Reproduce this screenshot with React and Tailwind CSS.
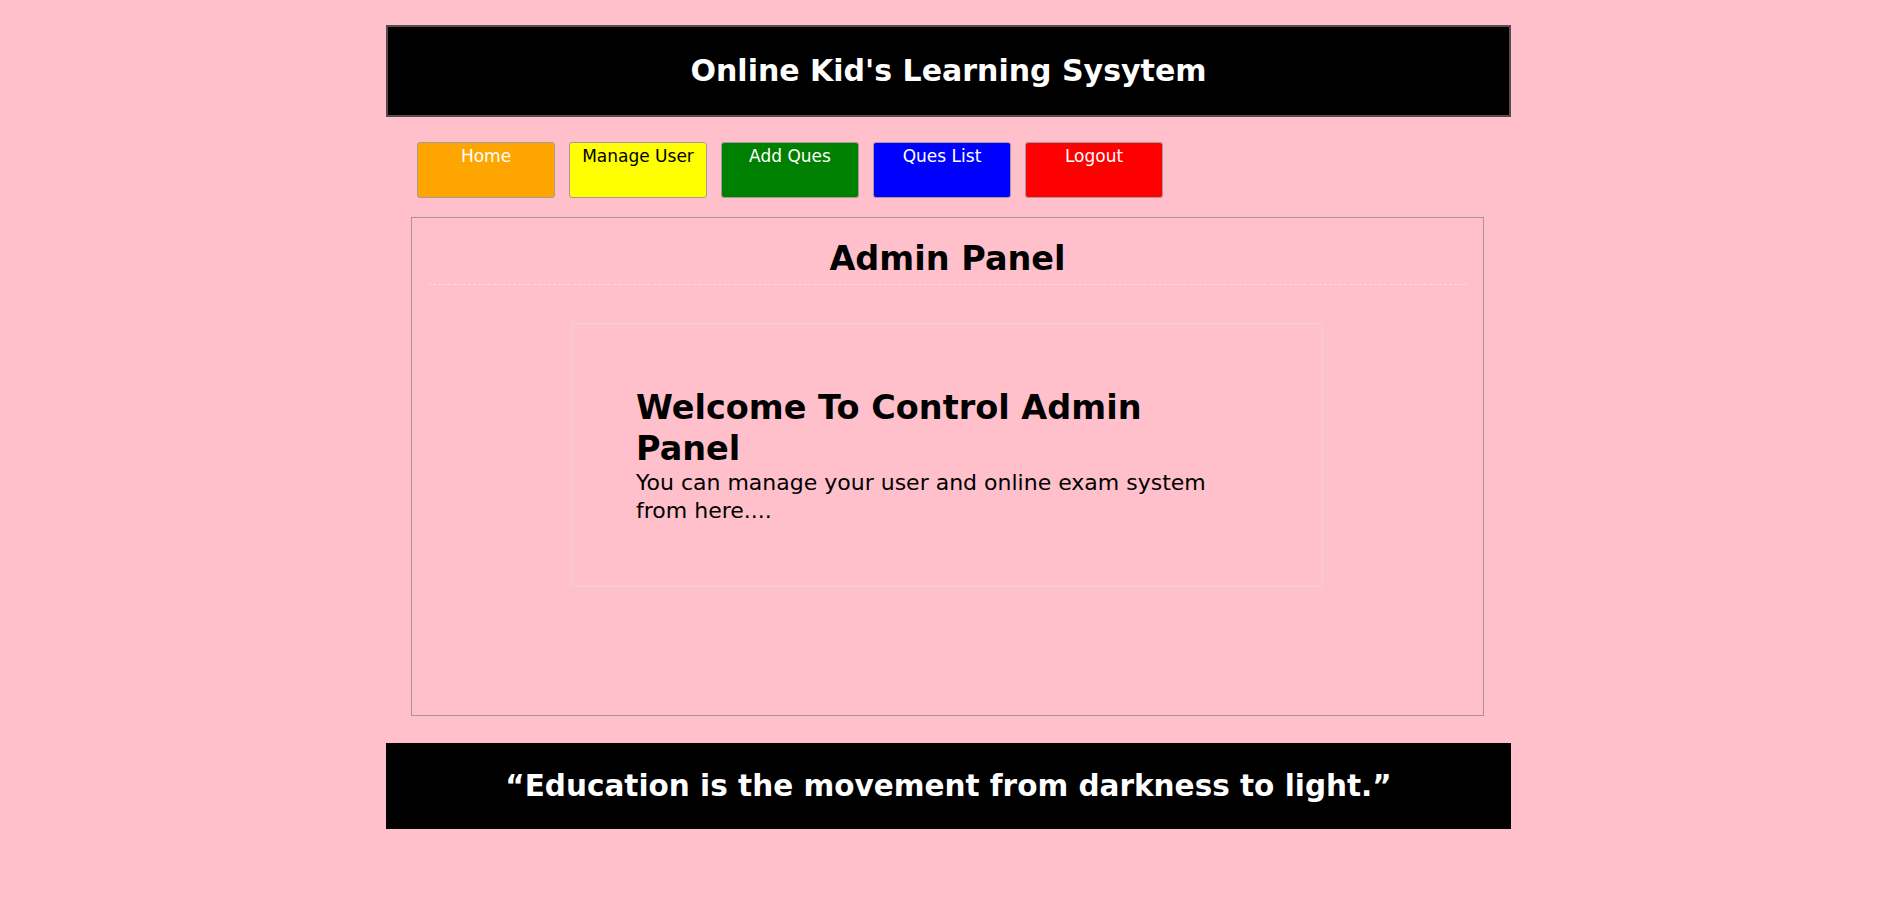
export default function App() {
  const font = { fontFamily: '"DejaVu Sans", Verdana, sans-serif' };
  const btns = [
    { t: "Home", c: "bg-[#ffa500] text-white" },
    { t: "Manage User", c: "bg-[#ffff00] text-black" },
    { t: "Add Ques", c: "bg-[#008000] text-white" },
    { t: "Ques List", c: "bg-[#0000ff] text-white" },
    { t: "Logout", c: "bg-[#ff0000] text-white" },
  ];
  return (
    <div className="min-h-[923px] w-full bg-[#ffc0cb] pt-[25px]" style={font}>
      <div className="ml-[386px] w-[1125px]">
        <header className="flex h-[92px] items-center justify-center border-2 border-[#584a4e] bg-black">
          <h1 className="text-[30px] font-bold leading-[36px] text-white">Online Kid's Learning Sysytem</h1>
        </header>
        <nav className="mt-[25px] flex gap-[14px] pl-[31px]">
          {btns.map((b) => (
            <button
              key={b.t}
              className={`flex h-[56px] w-[138px] items-start justify-center rounded-[3px] border border-[#a89a9c] pt-[3px] text-[17px] leading-[20px] ${b.c}`}
              style={font}
            >
              {b.t}
            </button>
          ))}
        </nav>
        <main className="mt-[19px] ml-[25px] h-[499px] w-[1073px] border border-[#a89599] px-[16px]">
          <h2 className="border-b border-dashed border-[#f7dde2] pt-[22px] pb-[6px] text-center text-[33.5px] font-bold leading-[38px] text-black">
            Admin Panel
          </h2>
          <div className="mx-auto mt-[38px] h-[264px] w-[751px] border border-[#ecd3d8] pl-[63px] pr-[86px] pt-[63px]">
            <h3 className="text-[33.5px] font-bold leading-[41px] text-black">Welcome To Control Admin Panel</h3>
            <p className="text-[22px] leading-[28px] text-black">
              You can manage your user and online exam system from here....
            </p>
          </div>
        </main>
        <footer className="mt-[27px] flex h-[86px] items-center justify-center bg-black">
          <p className="text-[29.5px] font-bold leading-[36px] text-white">“Education is the movement from darkness to light.”</p>
        </footer>
      </div>
    </div>
  );
}
